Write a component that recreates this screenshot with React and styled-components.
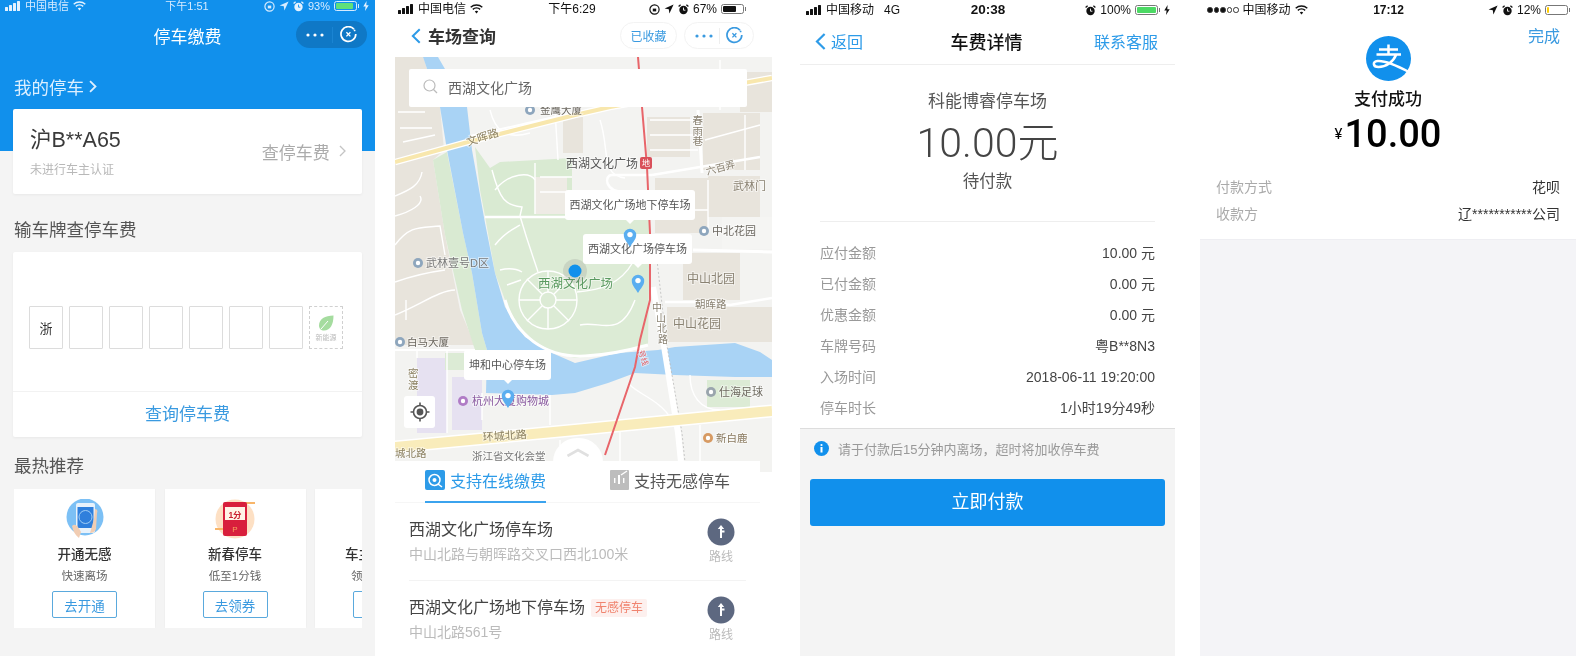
import styled, { createGlobalStyle } from "styled-components";

const GlobalStyle = createGlobalStyle`
  html, body {
    margin: 0;
    padding: 0;
    background: #fff;
    overflow: hidden;
  }
  * {
    box-sizing: border-box;
  }
  #root {
    font-family: "Liberation Sans", "Noto Sans CJK SC", sans-serif;
  }
`;

const BLUE = "#1190ec";
const LINK = "#3a9ae0";

const Page = styled.div`
  display: flex;
  width: 1576px;
  height: 656px;
  overflow: hidden;
`;

const Phone = styled.div`
  flex: none;
  display: flex;
  flex-direction: column;
  width: ${(p) => p.$width}px;
  height: 656px;
  margin-left: ${(p) => p.$gap || 0}px;
  background: ${(p) => p.$bg || "#fff"};
  filter: blur(${(p) => p.$blur || 0}px);
  overflow: hidden;
`;

/* status bar */
const Status = styled.div`
  flex: none;
  display: grid;
  grid-template-columns: 1fr auto 1fr;
  align-items: center;
  width: ${(p) => (p.$width ? `${p.$width}px` : "auto")};
  height: ${(p) => p.$height}px;
  padding: 0 ${(p) => p.$padRight || 6}px 0 ${(p) => p.$padLeft || 5}px;
  color: ${(p) => p.$color || "#111"};
  font-size: ${(p) => p.$size || 12}px;
  line-height: 1;
  .left,
  .right {
    display: flex;
    align-items: center;
    gap: 4px;
  }
  .right {
    justify-content: flex-end;
  }
  .time {
    font-size: ${(p) => p.$timeSize || p.$size || 12}px;
    font-weight: ${(p) => p.$timeWeight || 400};
  }
  .network {
    margin-left: 6px;
  }
`;

const Bars = ({ color = "#111" }) => (
  <svg width="16" height="10" viewBox="0 0 16 10">
    <rect x="0" y="6" width="3" height="4" rx="0.5" fill={color} />
    <rect x="4" y="4" width="3" height="6" rx="0.5" fill={color} />
    <rect x="8" y="2" width="3" height="8" rx="0.5" fill={color} />
    <rect x="12" y="0" width="3" height="10" rx="0.5" fill={color} />
  </svg>
);

const Wifi = ({ color = "#111" }) => (
  <svg width="13" height="10" viewBox="0 0 13 10" fill="none" stroke={color} strokeWidth="1.4">
    <path d="M0.7 3.2C4 0.2 9 0.2 12.3 3.2" />
    <path d="M2.8 5.4C4.9 3.6 8.1 3.6 10.2 5.4" />
    <path d="M6.5 9.4L4.8 7.4C5.8 6.6 7.2 6.6 8.2 7.4Z" fill={color} stroke="none" />
  </svg>
);

const LockRotate = ({ color = "#111" }) => (
  <svg width="11" height="11" viewBox="0 0 11 11" fill="none" stroke={color} strokeWidth="1.2">
    <circle cx="5.5" cy="5.5" r="4.6" />
    <rect x="3.8" y="4.6" width="3.4" height="2.8" fill={color} stroke="none" />
  </svg>
);

const Arrow = ({ color = "#111" }) => (
  <svg width="10" height="10" viewBox="0 0 10 10">
    <path d="M9.6 0.4L0.6 4.6L4.8 5.2L5.4 9.6Z" fill={color} />
  </svg>
);

const Alarm = ({ color = "#111", face = "#fff" }) => (
  <svg width="11" height="11" viewBox="0 0 11 11">
    <circle cx="5.5" cy="6" r="4.2" fill={color} />
    <path d="M0.6 2.4L2.6 0.7M10.4 2.4L8.4 0.7" stroke={color} strokeWidth="1.3" />
    <path d="M5.5 3.6V6.2H7.4" stroke={face} strokeWidth="0.9" fill="none" />
  </svg>
);

const Bolt = ({ color = "#111" }) => (
  <svg width="6" height="10" viewBox="0 0 6 10">
    <path d="M3.6 0L0.3 5.6H2.6L2 10L5.7 4.2H3.3Z" fill={color} />
  </svg>
);

const BatteryBody = styled.span`
  position: relative;
  display: inline-block;
  width: 23px;
  height: 10px;
  padding: 1px;
  margin-right: 2px;
  border: 1px solid ${(p) => p.$frame};
  border-radius: 2.5px;
  &::after {
    content: "";
    position: absolute;
    right: -3px;
    top: 2px;
    width: 1.5px;
    height: 4px;
    background: ${(p) => p.$frame};
  }
  i {
    display: block;
    height: 100%;
    background: ${(p) => p.$fill};
    border-radius: 1px;
  }
`;

const Battery = ({ level, fill, frame = "#777" }) => (
  <BatteryBody $fill={fill} $frame={frame}>
    <i style={{ width: `${level}%` }} />
  </BatteryBody>
);

const SignalDots = styled.span`
  display: inline-flex;
  gap: 1px;
  i {
    width: 5.5px;
    height: 5.5px;
    border-radius: 50%;
    border: 0.8px solid #333;
    background: #111;
  }
  i:nth-child(n + 4) {
    background: #fff;
  }
`;

/* first phone */
const Hero = styled.div`
  flex: none;
  height: 151px;
  background: ${BLUE};
`;

const HeroNav = styled.div`
  position: relative;
  display: flex;
  align-items: center;
  justify-content: center;
  height: 35px;
  margin-top: 6px;
  color: #fff;
  font-size: 17px;
`;

const Capsule = styled.div`
  position: absolute;
  right: 8px;
  top: 3px;
  display: flex;
  align-items: center;
  justify-content: space-between;
  width: 71px;
  height: 27px;
  padding: 0 10px;
  border-radius: 14px;
  background: #0f78c6;
`;

const MineLink = styled.div`
  display: flex;
  align-items: center;
  gap: 5px;
  height: 24px;
  margin: 21px 0 11px 14px;
  color: #dcefff;
  font-size: 17.5px;
`;

const Card = styled.div`
  margin: 0 13px;
  background: #fff;
  border-radius: 2px;
  box-shadow: 0 1px 3px rgba(0, 0, 0, 0.05);
`;

const PlateCard = styled(Card)`
  display: flex;
  align-items: center;
  justify-content: space-between;
  height: 85px;
  padding: 4px 16px 0 17px;
  .plate {
    color: #3a3a3a;
    font-size: 21.5px;
    line-height: 24px;
    margin-bottom: 8px;
  }
  .note {
    color: #b8b8b8;
    font-size: 12px;
    line-height: 20px;
  }
  .action {
    display: flex;
    align-items: center;
    gap: 9px;
    margin-bottom: 5px;
    color: #ababab;
    font-size: 17px;
  }
`;

const SectionTitle = styled.div`
  height: 24px;
  margin: ${(p) => p.$top}px 0 ${(p) => p.$bottom}px 14px;
  color: #555;
  font-size: 17.5px;
  line-height: 24px;
`;

const Plates = styled.div`
  display: flex;
  gap: 6px;
  height: 140px;
  padding: 54px 16px 43px;
  border-bottom: 1px solid #f2f2f2;
`;

const PlateBox = styled.div`
  display: flex;
  flex-direction: column;
  align-items: center;
  justify-content: center;
  width: 34px;
  height: 43px;
  border: 1px ${(p) => (p.$dashed ? "dashed #d0d0d0" : "solid #dcdcdc")};
  border-radius: 1px;
  color: #333;
  font-size: 13px;
  small {
    margin-top: 1px;
    color: #bbb;
    font-size: 7px;
    line-height: 9px;
  }
`;

const QueryLink = styled.div`
  height: 45px;
  color: ${LINK};
  font-size: 17px;
  line-height: 45px;
  text-align: center;
`;

const PromoRow = styled.div`
  display: flex;
  gap: 9.5px;
  margin: 0 13px 0 14px;
  overflow: hidden;
`;

const Promo = styled.div`
  flex: none;
  display: flex;
  flex-direction: column;
  align-items: center;
  width: 141px;
  height: 139px;
  padding-top: 10px;
  background: #fff;
  box-shadow: 0 0 2px rgba(0, 0, 0, 0.05);
  h4 {
    margin: 6px 0 0;
    color: #333;
    font-size: 13.5px;
    font-weight: 500;
    line-height: 20px;
    white-space: nowrap;
  }
  p {
    margin: 3px 0 0;
    color: #666;
    font-size: 11.5px;
    line-height: 16px;
    white-space: nowrap;
  }
  button {
    width: 65px;
    height: 27px;
    margin-top: 7px;
    padding: 0;
    background: #fff;
    border: 1px solid #5aa9dd;
    border-radius: 2px;
    color: ${LINK};
    font: inherit;
    font-size: 13.5px;
  }
`;

const PhoneArt = () => (
  <svg width="38" height="40" viewBox="0 0 38 40">
    <circle cx="19" cy="18" r="18.5" fill="#7cc0f5" />
    <rect x="10" y="4" width="19" height="30" rx="2" fill="#e8f2fb" />
    <rect x="11.5" y="8" width="16" height="21" fill="#2f7fdc" />
    <circle cx="19.5" cy="18" r="6.5" fill="none" stroke="#9fcdf5" strokeWidth="1" />
    <path d="M6 27C9 24 12 27 15 33L13 39C9 36 7 32 6 27Z" fill="#f1cdb3" />
    <path d="M29 10C31 10 32 12 31 14L30 30C29 33 26 34 24 34L28 20Z" fill="#f1cdb3" />
  </svg>
);

const EnvelopeArt = () => (
  <svg width="44" height="40" viewBox="0 0 44 40">
    <circle cx="22" cy="20" r="19.5" fill="#fde0c4" />
    <rect x="32" y="3" width="10" height="2" fill="#f8b66a" />
    <rect x="2" y="29" width="9" height="2" fill="#f8b66a" />
    <rect x="10" y="3" width="24" height="34" rx="2" fill="#d81f3c" />
    <rect x="12" y="8" width="20" height="13" fill="#fff3e6" />
    <text x="22" y="19" textAnchor="middle" fontSize="8.5" fontWeight="700" fill="#c9202f">1分</text>
    <text x="22" y="33" textAnchor="middle" fontSize="8" fill="#f7a35c">P</text>
  </svg>
);

const Leaf = () => (
  <svg width="18" height="18" viewBox="0 0 18 18">
    <path d="M16.5 1.5C8 1.5 2 5 2 11.5C2 14.5 4 16.5 7 16.5C13.5 16.5 16.5 10 16.5 1.5Z" fill="#a5dc9f" />
    <path d="M4 15L11 7" stroke="#fff" strokeWidth="1" />
  </svg>
);

/* second phone */
const NavBar = styled.div`
  flex: none;
  display: flex;
  align-items: center;
  gap: 7px;
  width: 365px;
  height: 39px;
  padding: 0 0 4px 16px;
  color: #333;
  font-size: 17px;
  font-weight: 700;
  .pills {
    display: flex;
    gap: 7px;
    margin-left: auto;
    margin-right: 6px;
  }
`;

const Pill = styled.div`
  display: flex;
  align-items: center;
  justify-content: ${(p) => (p.$wide ? "space-between" : "center")};
  width: ${(p) => (p.$wide ? 70 : 57)}px;
  height: 27px;
  padding: ${(p) => (p.$wide ? "0 10px" : "0")};
  border: 1px solid #f3f3f3;
  border-radius: 14px;
  color: ${LINK};
  font-size: 12px;
  font-weight: 400;
`;

const MapFrame = styled.div`
  position: relative;
  flex: none;
  width: 377px;
  height: 415px;
  background: #f3f3f1;
  svg.map {
    display: block;
  }
`;

const SearchBox = styled.div`
  position: absolute;
  left: 14px;
  top: 12px;
  display: flex;
  align-items: center;
  gap: 10px;
  width: 338px;
  height: 38px;
  padding: 0 0 3px 14px;
  background: #fff;
  border-radius: 2px;
  color: #666;
  font-size: 14px;
`;

const Callout = styled.div`
  position: absolute;
  left: ${(p) => p.$x}px;
  top: ${(p) => p.$y}px;
  width: ${(p) => p.$w}px;
  height: 30px;
  background: #fff;
  border-radius: 3px;
  color: #555;
  font-size: 11px;
  line-height: 30px;
  text-align: center;
  white-space: nowrap;
  &::after {
    content: "";
    position: absolute;
    left: 50%;
    bottom: -4px;
    margin-left: -4px;
    border: 4px solid transparent;
    border-bottom: 0;
    border-top-color: #fff;
  }
`;

const PinMark = styled.svg`
  position: absolute;
  left: ${(p) => p.$x}px;
  top: ${(p) => p.$y}px;
`;

const Pin = ({ x, y }) => (
  <PinMark $x={x} $y={y} width="14" height="19" viewBox="0 0 14 19">
    <path d="M7 19C4.5 14.5 0.8 11.5 0.8 7A6.2 6.2 0 1 1 13.2 7C13.2 11.5 9.5 14.5 7 19Z" fill="#5aaef0" />
    <circle cx="7" cy="6.6" r="2.7" fill="#fff" />
  </PinMark>
);

const LocateButton = styled.div`
  position: absolute;
  left: 9px;
  top: 339px;
  display: flex;
  align-items: center;
  justify-content: center;
  width: 31px;
  height: 32px;
  background: #fff;
  border-radius: 3px;
`;

const Sheet = styled.div`
  position: relative;
  flex: 1;
  width: 365px;
  margin-top: -11px;
  background: #fff;
`;

const Handle = styled.div`
  position: absolute;
  left: 158px;
  top: -23px;
  display: flex;
  justify-content: center;
  width: 50px;
  height: 24px;
  padding-top: 10px;
  background: #fff;
  border-radius: 25px 25px 0 0;
`;

const Tabs = styled.div`
  display: flex;
  height: 42px;
  padding-left: 30px;
  border-bottom: 1px solid #f6f6f6;
`;

const Tab = styled.div`
  display: flex;
  align-items: center;
  gap: 5px;
  height: 42px;
  margin-right: ${(p) => p.$gap || 0}px;
  padding-bottom: 2px;
  border-bottom: 2px solid ${(p) => (p.$active ? "#3ba3ee" : "transparent")};
  color: ${(p) => (p.$active ? "#2d9be8" : "#555")};
  font-size: 16px;
`;

const Lot = styled.div`
  display: flex;
  justify-content: space-between;
  height: ${(p) => p.$height}px;
  margin: 0 14px;
  padding-top: 15px;
  border-bottom: ${(p) => (p.$line ? "1px solid #f3f3f3" : "none")};
  h4 {
    display: flex;
    align-items: center;
    gap: 6px;
    margin: 1px 0 0;
    color: #444;
    font-size: 16px;
    font-weight: 400;
    line-height: 22px;
  }
  p {
    margin: 3px 0 0;
    color: #bbb;
    font-size: 14px;
    line-height: 20px;
  }
`;

const Tag = styled.span`
  padding: 0 4px;
  background: #fdf0ee;
  border-radius: 2px;
  color: #f0846f;
  font-size: 12px;
  line-height: 18px;
`;

const RouteButton = styled.div`
  display: flex;
  flex-direction: column;
  align-items: center;
  gap: 3px;
  width: 30px;
  margin-right: 10px;
  color: #bbb;
  font-size: 12px;
  line-height: 16px;
`;

const RouteIcon = () => (
  <svg width="28" height="28" viewBox="0 0 28 28">
    <circle cx="14" cy="14" r="13.5" fill="#5d6880" />
    <path d="M14 7L10.8 11H13V20H15V14.5H17.5V12.5H15V11H17.2Z" fill="#fff" />
  </svg>
);

const Label = ({ x, y, size = 11, color = "#6b675f", rotate, children, anchor }) => (
  <text
    x={x}
    y={y}
    fontSize={size}
    fill={color}
    textAnchor={anchor}
    transform={rotate ? `rotate(${rotate} ${x} ${y})` : undefined}
    stroke="#fff"
    strokeWidth="2"
    strokeOpacity="0.5"
    paintOrder="stroke"
  >
    {children}
  </text>
);

const Poi = ({ x, y, color = "#8ea6bd" }) => (
  <g>
    <circle cx={x} cy={y} r="5" fill={color} />
    <circle cx={x} cy={y} r="2.2" fill="#fff" />
  </g>
);

const BROWN = "#8a8272";

const CityMap = () => (
  <svg className="map" width="377" height="415" viewBox="395 57 377 415">
    <rect x="395" y="57" width="377" height="415" fill="#f3f3f1" />
    {/* land left of the river */}
    <path d="M395 57H423L440 107L444 150L433 160L445 235L460 310L475 345H395Z" fill="#e8e4dc" />
    {/* blocks */}
    <g fill="#e8e4dc">
      <rect x="563" y="117" width="20" height="36" />
      <rect x="647" y="117" width="43" height="40" />
      <rect x="703" y="113" width="57" height="57" />
      <rect x="655" y="178" width="53" height="55" />
      <rect x="708" y="176" width="52" height="41" />
      <rect x="683" y="253" width="57" height="47" />
      <rect x="667" y="307" width="65" height="35" />
      <rect x="732" y="307" width="40" height="35" />
      <rect x="740" y="72" width="32" height="40" />
    </g>
    <rect x="722" y="217" width="50" height="32" fill="#f5f5f3" />
    {/* park */}
    <path d="M433 160L447 152L463 233L472 273L482 333L487 350H475L462 310L445 235Z" fill="#d9ead2" />
    <path d="M475 147L490 168L500 162L572 158V216H485L480 190Z" fill="#d9ead2" />
    <path d="M485 216H650L648 345C620 352 590 358 575 358C540 350 520 335 505 300L495 273Z" fill="#dcebd5" />
    <rect x="535" y="177" width="32" height="37" fill="#eeebe5" />
    {/* low rise */}
    <rect x="417" y="358" width="30" height="75" fill="#e6e1f1" />
    <rect x="452" y="377" width="30" height="53" fill="#e6e1f1" />
    <rect x="445" y="353" width="20" height="17" fill="#dcebd5" />
    <rect x="707" y="380" width="43" height="27" fill="#dcebd5" />
    {/* water */}
    <path
      d="M423 57H438L467 107L472 150L485 223L495 273L505 307L525 337L552 353L575 363L618 353L658 350L675 347L735 343L760 352L772 360V377L735 377L675 375L635 373L608 383L575 393L552 395L486 393L487 350L482 333L472 273L463 233L447 150L440 107Z"
      fill="#a9d3f5"
    />
    {/* white roads */}
    <g fill="none" stroke="#fff" strokeWidth="1.4">
      <path d="M485 217H650" strokeWidth="2.5" />
      <path d="M492 170C500 200 505 205 522 207L520 216" />
      <path d="M495 190C510 172 530 172 535 180" />
      <path d="M535 163V214M540 177H572M540 192H572" />
      <path d="M520 216C530 250 535 262 538 272" />
      <path d="M495 245C505 232 515 228 520 225" />
      <circle cx="548" cy="300" r="29" />
      <circle cx="548" cy="300" r="8" />
      <path d="M540 300H519M556 300H577M548 292V271M548 308V329M542 294L527 279M554 306L569 321M554 294L569 279M542 306L527 321" />
      <path d="M505 300C515 335 545 358 585 356C610 355 630 350 648 345" strokeWidth="3" />
      <path d="M500 270C508 268 515 268 522 272M507 285L521 280" />
      <path d="M577 292C600 290 620 285 633 262" />
      <path d="M635 300C620 340 600 320 580 325" />
      <path d="M395 196C410 190 420 185 422 172M395 216C410 212 425 204 420 196" />
      <path d="M395 245C410 225 420 228 440 226L445 255" />
      <path d="M395 282C415 275 430 272 445 270M406 300V320M395 315C420 305 440 290 455 290" />
      <path d="M398 112H425M400 128H432M403 142L435 135M415 90H440" />
      <path d="M600 120C610 150 600 175 625 178" />
      <path d="M652 175H612C604 175 604 192 625 192H655" strokeWidth="2.5" />
      <path d="M652 175L760 157" strokeWidth="2.5" />
      <path d="M698 110L702 173" strokeWidth="3" />
      <path d="M693 250L772 252" strokeWidth="3" />
      <path d="M665 302H700L730 305L772 298" strokeWidth="2.5" />
      <path d="M650 120H698M650 135H698M650 150H698M705 140L760 125" />
      <path d="M664 210H708M708 233V180" />
      <path d="M720 60V110M745 115V170" />
      <path d="M417 350V358M447 350V433M482 393V420M550 395V425" />
      <path d="M395 350H475" strokeWidth="2" />
      <path d="M630 385C640 395 660 400 672 420" />
      <path d="M690 375C690 395 700 410 720 410" />
      <path d="M470 136C520 125 560 115 590 110" strokeWidth="2" />
      <path d="M490 110C495 130 505 140 530 133" />
      <path d="M555 110L558 160" />
      <path d="M560 440V470M620 430V470M700 425V470" />
    </g>
    <path d="M653 287L663 340L678 433L682 472" fill="none" stroke="#fff" strokeWidth="6" />
    <path d="M657 260L666 340L682 433L686 472" fill="none" stroke="#bdbdbd" strokeWidth="0.8" strokeDasharray="2 2" />
    {/* yellow roads */}
    <path d="M395 162L468 142L575 115L610 107L772 78" fill="none" stroke="#fff" strokeWidth="6.5" />
    <path d="M395 162L468 142L575 115L610 107L772 78" fill="none" stroke="#f8e7ad" strokeWidth="4" />
    <path d="M395 447L575 430L760 412L772 411" fill="none" stroke="#fff" strokeWidth="13" />
    <path d="M395 447L575 430L760 412L772 411" fill="none" stroke="#f9ecbb" strokeWidth="10" />
    {/* metro */}
    <path
      d="M638 57L642 107L647 167L650 233L650 300L640 340L635 367L605 455"
      fill="none"
      stroke="#e8656a"
      strokeWidth="2"
    />
    <rect x="640" y="157" width="12" height="12" rx="2" fill="#d9505a" />
    <text x="646" y="166" fontSize="8" textAnchor="middle" fill="#fff">地</text>
    {/* labels */}
    <Poi x={530} y={110} />
    <Label x={540} y={114} size={10.5}>金鹰大厦</Label>
    <Label x={468} y={146} rotate={-18} color="#8a7f5f">文晖路</Label>
    <Label x={692.5} y={124} size={10.5} color={BROWN}>春</Label>
    <Label x={692.5} y={135} size={10.5} color={BROWN}>雨</Label>
    <Label x={692.5} y={145} size={10.5} color={BROWN}>巷</Label>
    <Label x={566} y={168} size={12} color="#555">西湖文化广场</Label>
    <Label x={707} y={175} rotate={-15} size={10} color={BROWN}>六百弄</Label>
    <Label x={733} y={190} color={BROWN}>武林门</Label>
    <Poi x={704} y={231} />
    <Label x={712} y={235}>中北花园</Label>
    <Poi x={418} y={263} />
    <Label x={426} y={267} color="#7a7a7a">武林壹号D区</Label>
    <Label x={538} y={288} size={12.5} color="#5a9a60">西湖文化广场</Label>
    <Label x={687} y={283} size={12} color={BROWN}>中山北园</Label>
    <Label x={695} y={308} size={10.5} color={BROWN}>朝晖路</Label>
    <Label x={673} y={328} size={12} color={BROWN}>中山花园</Label>
    <Label x={652} y={311} size={10} color={BROWN}>中</Label>
    <Label x={656} y={322} size={10} color={BROWN}>山</Label>
    <Label x={657} y={332} size={10} color={BROWN}>北</Label>
    <Label x={658} y={343} size={10} color={BROWN}>路</Label>
    <Poi x={400} y={342} />
    <Label x={407} y={346} size={10.5}>白马大厦</Label>
    <Label x={408} y={377} size={10.5} color="#8a7f5f">密</Label>
    <Label x={408} y={389} size={10.5} color="#8a7f5f">渡</Label>
    <Poi x={463} y={401} color="#b07cc6" />
    <Label x={472} y={405} color="#8a5aa0">杭州大厦购物城</Label>
    <Poi x={711} y={392} color="#9aa5ad" />
    <Label x={719} y={396} color="#6e6a60">仕海足球</Label>
    <Poi x={708} y={438} color="#d79a62" />
    <Label x={716} y={442} size={10.5} color="#8a7a5f">新白鹿</Label>
    <Label x={483} y={441} rotate={-4} color="#8a7f5f">环城北路</Label>
    <Label x={395} y={457} size={10.5} color="#8a7f5f">城北路</Label>
    <Label x={472} y={460} size={10.5} color="#777">浙江省文化会堂</Label>
    <Label x={638} y={351} rotate={72} size={8} color="#e8656a">号线</Label>
    <circle cx="575" cy="271" r="12" fill="#777" fillOpacity="0.18" />
    <circle cx="575" cy="271" r="6.5" fill="#1190ec" />
  </svg>
);

/* third and fourth phones */
const TopBar = styled.div`
  flex: none;
  display: grid;
  grid-template-columns: 1fr auto 1fr;
  align-items: center;
  height: 45px;
  padding: 0 17px 2px 15px;
  border-bottom: 1px solid #eee;
  h3 {
    margin: 0;
    color: #111;
    font-size: 18px;
    font-weight: 500;
  }
  a {
    display: flex;
    align-items: center;
    gap: 5px;
    color: #2d9be8;
    font-size: 16px;
  }
  a:last-child {
    justify-content: flex-end;
  }
`;

const Summary = styled.div`
  flex: none;
  height: 157px;
  margin: 0 20px;
  padding-top: 25px;
  border-bottom: 1px solid #eee;
  color: #555;
  text-align: center;
  .park {
    font-size: 17px;
    line-height: 24px;
  }
  .amount {
    margin-top: 5px;
    color: #444;
    font-family: Roboto, "Noto Sans CJK SC", sans-serif;
    font-size: 41px;
    font-weight: 300;
    line-height: 48px;
  }
  .state {
    margin-top: 2px;
    font-size: 16.5px;
    line-height: 24px;
  }
`;

const Details = styled.div`
  flex: none;
  padding: ${(p) => p.$top}px ${(p) => p.$side}px ${(p) => p.$bottom}px;
`;

const DetailRow = styled.div`
  display: flex;
  justify-content: space-between;
  height: ${(p) => p.$height}px;
  color: ${(p) => p.$value};
  font-size: 14px;
  line-height: ${(p) => p.$height}px;
  span:first-child {
    color: ${(p) => p.$key};
  }
`;

const PayArea = styled.div`
  flex: 1;
  padding: 10px 10px 0;
  background: #f4f4f4;
  border-top: 1px solid #ddd;
`;

const Notice = styled.div`
  display: flex;
  align-items: center;
  gap: 9px;
  height: 18px;
  padding-left: 4px;
  color: #999;
  font-size: 13px;
`;

const PayButton = styled.div`
  height: 47px;
  margin-top: 22px;
  background: ${BLUE};
  border-radius: 3px;
  color: #fff;
  font-size: 18px;
  line-height: 47px;
  text-align: center;
`;

const ResultHead = styled.div`
  flex: none;
  display: grid;
  grid-template-columns: 1fr auto 1fr;
  padding: 7px 16px 0;
  .done {
    justify-self: end;
    color: ${LINK};
    font-size: 16px;
    line-height: 20px;
  }
`;

const ResultMain = styled.div`
  display: flex;
  flex-direction: column;
  align-items: center;
  svg {
    display: block;
    margin-top: 9px;
  }
  h3 {
    margin: 7px 0 0;
    color: #111;
    font-size: 17px;
    font-weight: 500;
    line-height: 24px;
  }
  .money {
    display: flex;
    align-items: center;
    gap: 2px;
    height: 44px;
    color: #000;
    font-family: Roboto, "Liberation Sans", sans-serif;
    font-size: 38px;
    font-weight: 500;
    line-height: 44px;
    small {
      font-size: 15px;
      font-weight: 400;
    }
  }
`;

const Rest = styled.div`
  flex: 1;
  background: #f4f4f7;
  border-top: 1px solid #eeeef2;
`;

const AlipayLogo = () => (
  <svg width="45" height="45" viewBox="0 0 45 45" fill="none">
    <circle cx="22.5" cy="22.5" r="22.5" fill={BLUE} />
    <path
      d="M22.5 8.5V18.5M13 13.5H32M10.5 18.5H35M30 19C27.5 25.5 20 31 12.5 31C7 31 6 25.5 11.5 25C19 24.3 29 28.5 43 36"
      stroke="#fff"
      strokeWidth="2.5"
    />
  </svg>
);

const details = [
  ["应付金额", "10.00 元"],
  ["已付金额", "0.00 元"],
  ["优惠金额", "0.00 元"],
  ["车牌号码", "粤B**8N3"],
  ["入场时间", "2018-06-11 19:20:00"],
  ["停车时长", "1小时19分49秒"],
];

const promos = [
  { title: "开通无感", sub: "快速离场", action: "去开通", art: <PhoneArt /> },
  { title: "新春停车", sub: "低至1分钱", action: "去领券", art: <EnvelopeArt /> },
  { title: "车主专享福利", sub: "领取停车优惠", action: "去领取", art: <PhoneArt /> },
];

const Chevron = ({ color, size = 12, weight = 1.4 }) => (
  <svg width={size * 0.6} height={size} viewBox="0 0 6 10" fill="none" stroke={color} strokeWidth={weight}>
    <path d="M0.8 0.8L5 5L0.8 9.2" />
  </svg>
);

const BackArrow = ({ color, width = 11, height = 17 }) => (
  <svg width={width} height={height} viewBox="0 0 11 17" fill="none" stroke={color} strokeWidth="2.2">
    <path d="M9.6 1L2 8.5L9.6 16" />
  </svg>
);

const MoreDots = ({ color }) => (
  <svg width="18" height="4" viewBox="0 0 18 4">
    <circle cx="2" cy="2" r="1.6" fill={color} />
    <circle cx="9" cy="2" r="1.6" fill={color} />
    <circle cx="16" cy="2" r="1.6" fill={color} />
  </svg>
);

const CloseRing = ({ color }) => (
  <svg width="17" height="17" viewBox="0 0 17 17" fill="none" stroke={color} strokeWidth="1.7">
    <path d="M14 3.2A7.4 7.4 0 1 0 15.8 8" />
    <circle cx="14.6" cy="4.4" r="0.9" fill={color} stroke="none" />
    <path d="M6.4 6.2L10.4 10.4M10.4 6.2L6.4 10.4" strokeWidth="1.3" />
  </svg>
);

const Divider = styled.span`
  width: 1px;
  height: 16px;
  background: ${(p) => p.$color};
`;

const App = () => {
  return (
    <>
      <GlobalStyle />
      <Page>
        <Phone $width={375} $bg="#f4f4f4" $blur={0.5}>
          <Hero>
            <Status $height={12} $size={11} $color="#d6ebff" $padLeft={5} $padRight={6}>
              <div className="left">
                <Bars color="#e4f2ff" />
                <span>中国电信</span>
                <Wifi color="#e4f2ff" />
              </div>
              <span className="time">下午1:51</span>
              <div className="right">
                <LockRotate color="#d6ebff" />
                <Arrow color="#d6ebff" />
                <Alarm color="#e4f2ff" face={BLUE} />
                <span>93%</span>
                <Battery level={90} fill="#5fe07a" frame="#d6ebff" />
                <Bolt color="#e4f2ff" />
              </div>
            </Status>
            <HeroNav>
              停车缴费
              <Capsule>
                <MoreDots color="#fff" />
                <Divider $color="#1a84d2" />
                <CloseRing color="#fff" />
              </Capsule>
            </HeroNav>
            <MineLink>
              我的停车
              <Chevron color="#dcefff" size={13} />
            </MineLink>
            <PlateCard>
              <div>
                <div className="plate">沪B**A65</div>
                <div className="note">未进行车主认证</div>
              </div>
              <div className="action">
                查停车费
                <Chevron color="#c4c4c4" size={12} weight={1.1} />
              </div>
            </PlateCard>
          </Hero>
          <SectionTitle $top={67} $bottom={10}>输车牌查停车费</SectionTitle>
          <Card>
            <Plates>
              <PlateBox>浙</PlateBox>
              <PlateBox />
              <PlateBox />
              <PlateBox />
              <PlateBox />
              <PlateBox />
              <PlateBox />
              <PlateBox $dashed>
                <Leaf />
                <small>新能源</small>
              </PlateBox>
            </Plates>
            <QueryLink>查询停车费</QueryLink>
          </Card>
          <SectionTitle $top={17} $bottom={11}>最热推荐</SectionTitle>
          <PromoRow>
            {promos.map((item) => (
              <Promo key={item.title}>
                {item.art}
                <h4>{item.title}</h4>
                <p>{item.sub}</p>
                <button>{item.action}</button>
              </Promo>
            ))}
          </PromoRow>
        </Phone>

        <Phone $width={377} $gap={20} $blur={0.5}>
          <Status $height={18} $size={12} $padLeft={3} $padRight={14} $width={365}>
            <div className="left">
              <Bars />
              <span>中国电信</span>
              <Wifi />
            </div>
            <span className="time">下午6:29</span>
            <div className="right">
              <LockRotate />
              <Arrow />
              <Alarm />
              <span>67%</span>
              <Battery level={66} fill="#111" />
            </div>
          </Status>
          <NavBar>
            <BackArrow color="#2d9be8" width={10} height={16} />
            车场查询
            <div className="pills">
              <Pill>已收藏</Pill>
              <Pill $wide>
                <MoreDots color={LINK} />
                <Divider $color="#eee" />
                <CloseRing color={LINK} />
              </Pill>
            </div>
          </NavBar>
          <MapFrame>
            <CityMap />
            <SearchBox>
              <svg width="15" height="15" viewBox="0 0 15 15" fill="none" stroke="#bbb" strokeWidth="1.2">
                <circle cx="6.5" cy="6.5" r="5.5" />
                <path d="M10.5 10.5L14 14" />
              </svg>
              西湖文化广场
            </SearchBox>
            <Callout $x={170} $y={133} $w={130}>西湖文化广场地下停车场</Callout>
            <Callout $x={188} $y={177} $w={109}>西湖文化广场停车场</Callout>
            <Callout $x={69} $y={293} $w={87}>坤和中心停车场</Callout>
            <Pin x={228} y={171} />
            <Pin x={236} y={217} />
            <Pin x={106} y={332} />
            <LocateButton>
              <svg width="20" height="20" viewBox="0 0 20 20" fill="none" stroke="#555" strokeWidth="1.6">
                <circle cx="10" cy="10" r="6.5" />
                <circle cx="10" cy="10" r="3.4" fill="#555" stroke="none" />
                <path d="M10 0.5V3.5M10 16.5V19.5M0.5 10H3.5M16.5 10H19.5" />
              </svg>
            </LocateButton>
          </MapFrame>
          <Sheet>
            <Handle>
              <svg width="24" height="9" viewBox="0 0 24 9" fill="none" stroke="#e0e0e0" strokeWidth="2.6">
                <path d="M1.5 8L12 2L22.5 8" />
              </svg>
            </Handle>
            <Tabs>
              <Tab $active $gap={64}>
                <svg width="20" height="20" viewBox="0 0 20 20">
                  <rect width="20" height="20" rx="2" fill="#2d9be8" />
                  <circle cx="9.5" cy="10" r="5.5" fill="none" stroke="#fff" strokeWidth="1.5" />
                  <circle cx="9.5" cy="10" r="2" fill="#fff" />
                  <path d="M13 14L17 17" stroke="#fff" strokeWidth="1.5" />
                </svg>
                支持在线缴费
              </Tab>
              <Tab>
                <svg width="19" height="20" viewBox="0 0 19 20">
                  <rect width="19" height="20" rx="1" fill="#bdbdbd" />
                  <rect x="8" y="5" width="2" height="9" fill="#fff" />
                  <path d="M11 5L17 1" stroke="#fff" strokeWidth="1.4" />
                  <rect x="4" y="8" width="1.4" height="5" fill="#fff" />
                  <rect x="13" y="8" width="1.4" height="5" fill="#fff" />
                </svg>
                支持无感停车
              </Tab>
            </Tabs>
            <Lot $height={78} $line>
              <div>
                <h4>西湖文化广场停车场</h4>
                <p>中山北路与朝晖路交叉口西北100米</p>
              </div>
              <RouteButton>
                <RouteIcon />
                路线
              </RouteButton>
            </Lot>
            <Lot $height={70}>
              <div>
                <h4>
                  西湖文化广场地下停车场
                  <Tag>无感停车</Tag>
                </h4>
                <p>中山北路561号</p>
              </div>
              <RouteButton>
                <RouteIcon />
                路线
              </RouteButton>
            </Lot>
          </Sheet>
        </Phone>

        <Phone $width={375} $gap={28} $blur={0.2}>
          <Status $height={20} $size={12} $timeSize={13.5} $timeWeight={700} $padLeft={6} $padRight={5}>
            <div className="left">
              <Bars />
              <span>中国移动</span>
              <span className="network">4G</span>
            </div>
            <span className="time">20:38</span>
            <div className="right">
              <Alarm />
              <span>100%</span>
              <Battery level={100} fill="#4cd964" />
              <Bolt />
            </div>
          </Status>
          <TopBar>
            <a>
              <BackArrow color="#2d9be8" />
              返回
            </a>
            <h3>车费详情</h3>
            <a>联系客服</a>
          </TopBar>
          <Summary>
            <div className="park">科能博睿停车场</div>
            <div className="amount">10.00元</div>
            <div className="state">待付款</div>
          </Summary>
          <Details $top={16} $side={20} $bottom={4}>
            {details.map(([key, value]) => (
              <DetailRow key={key} $height={31} $key="#999" $value="#444">
                <span>{key}</span>
                <span>{value}</span>
              </DetailRow>
            ))}
          </Details>
          <PayArea>
            <Notice>
              <svg width="15" height="15" viewBox="0 0 15 15">
                <circle cx="7.5" cy="7.5" r="7.5" fill={BLUE} />
                <circle cx="7.5" cy="4" r="1.1" fill="#fff" />
                <rect x="6.5" y="6" width="2" height="5.5" fill="#fff" />
              </svg>
              请于付款后15分钟内离场，超时将加收停车费
            </Notice>
            <PayButton>立即付款</PayButton>
          </PayArea>
        </Phone>

        <Phone $width={376} $gap={25} $blur={0.2}>
          <Status $height={20} $size={12} $timeWeight={700} $padLeft={7} $padRight={6}>
            <div className="left">
              <SignalDots>
                <i />
                <i />
                <i />
                <i />
                <i />
              </SignalDots>
              <span>中国移动</span>
              <Wifi />
            </div>
            <span className="time">17:12</span>
            <div className="right">
              <Arrow />
              <Alarm />
              <span>12%</span>
              <Battery level={12} fill="#ffcc00" />
            </div>
          </Status>
          <ResultHead>
            <span />
            <ResultMain>
              <AlipayLogo />
              <h3>支付成功</h3>
              <div className="money">
                <small>¥</small>
                10.00
              </div>
            </ResultMain>
            <span className="done">完成</span>
          </ResultHead>
          <Details $top={18} $side={16} $bottom={11}>
            <DetailRow $height={27} $key="#aaa" $value="#333">
              <span>付款方式</span>
              <span>花呗</span>
            </DetailRow>
            <DetailRow $height={27} $key="#aaa" $value="#333">
              <span>收款方</span>
              <span>辽***********公司</span>
            </DetailRow>
          </Details>
          <Rest />
        </Phone>
      </Page>
    </>
  );
};

export default App;
